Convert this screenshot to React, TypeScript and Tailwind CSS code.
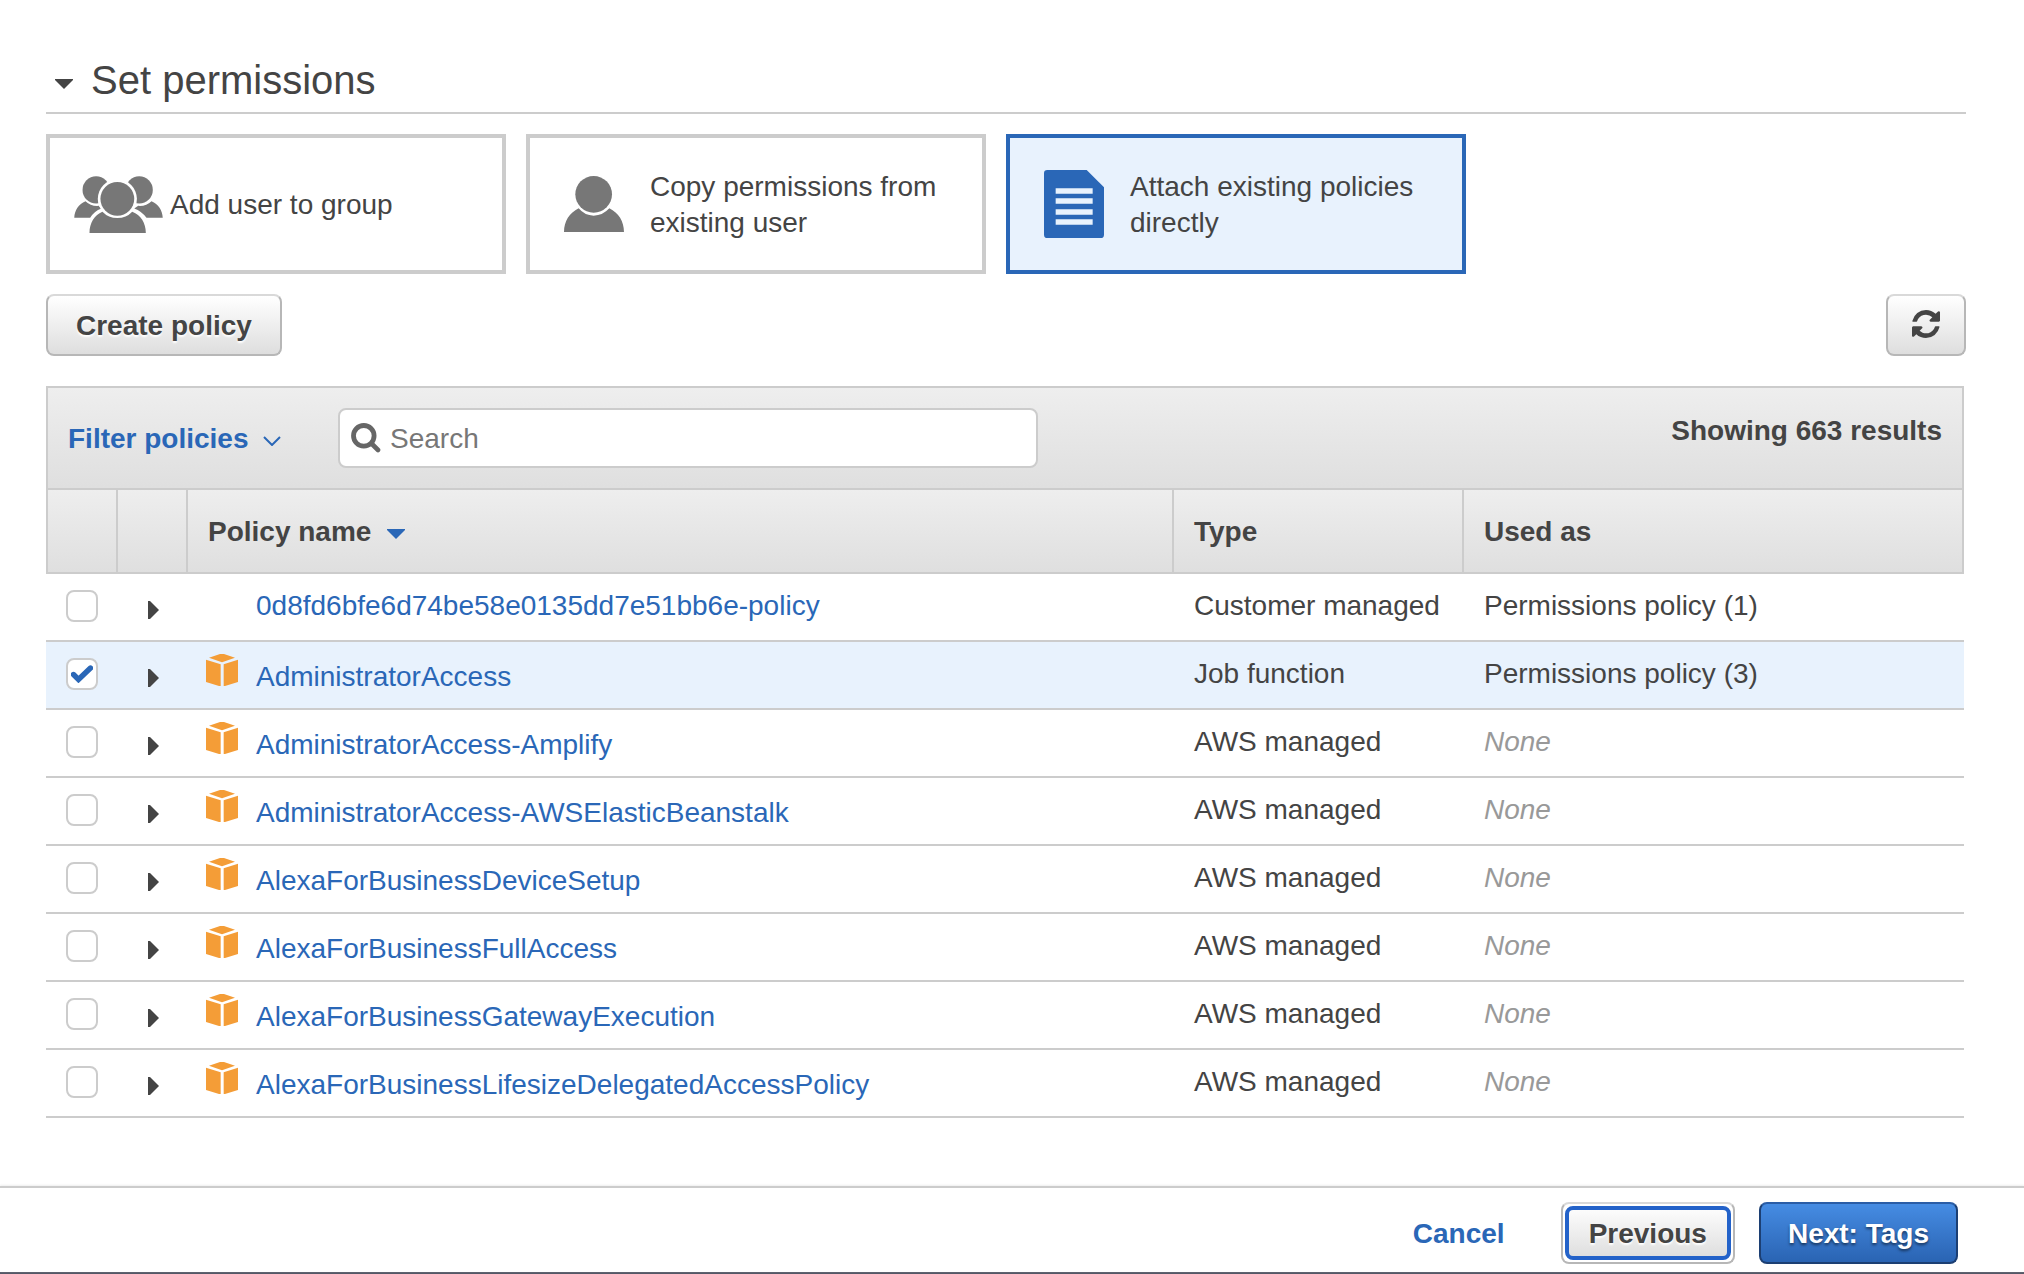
import React, { useState } from 'react';

interface Policy {
  name: string;
  type: string;
  usedAs: string | null;
  aws: boolean;
}

interface OptionCardProps {
  label: string;
  active: boolean;
  iconClass: string;
  icon: React.ReactNode;
  onSelect: () => void;
}

const policies: Policy[] = [
  {
    name: '0d8fd6bfe6d74be58e0135dd7e51bb6e-policy',
    type: 'Customer managed',
    usedAs: 'Permissions policy (1)',
    aws: false,
  },
  {
    name: 'AdministratorAccess',
    type: 'Job function',
    usedAs: 'Permissions policy (3)',
    aws: true,
  },
  { name: 'AdministratorAccess-Amplify', type: 'AWS managed', usedAs: null, aws: true },
  { name: 'AdministratorAccess-AWSElasticBeanstalk', type: 'AWS managed', usedAs: null, aws: true },
  { name: 'AlexaForBusinessDeviceSetup', type: 'AWS managed', usedAs: null, aws: true },
  { name: 'AlexaForBusinessFullAccess', type: 'AWS managed', usedAs: null, aws: true },
  { name: 'AlexaForBusinessGatewayExecution', type: 'AWS managed', usedAs: null, aws: true },
  {
    name: 'AlexaForBusinessLifesizeDelegatedAccessPolicy',
    type: 'AWS managed',
    usedAs: null,
    aws: true,
  },
];

const GroupIcon = () => (
  <svg className="h-[57px] w-[89px]" viewBox="132 404 267 172" fill="#777" aria-hidden="true">
    <circle cx="198" cy="446" r="41" />
    <circle cx="328" cy="446" r="41" />
    <path d="M132 530C133 508 145 488 166 480Q182 496 206 494L214 502Q192 510 180 530Z" />
    <path d="M399 530C398 508 386 488 365 480Q349 496 325 494L313 502Q335 510 350 530Z" />
    <circle cx="262" cy="473" r="59" fill="#fff" />
    <circle cx="262" cy="473" r="51" />
    <path d="M178 576C178 546 193 522 217 512Q235 531 262 531Q289 531 307 512C333 522 348 546 348 576Z" />
  </svg>
);

const UserIcon = () => (
  <svg className="h-14 w-[60px]" viewBox="192 168 180 168" fill="#777" aria-hidden="true">
    <circle cx="281" cy="223" r="55" />
    <path d="M192 336C192 304 208 279 236 265Q254 287 281 287Q308 287 328 265C356 279 372 304 372 336Z" />
  </svg>
);

const DocumentIcon = () => (
  <svg className="h-[68px] w-[60px]" viewBox="192 150 180 204" aria-hidden="true">
    <path
      d="M202 150H320L372 202V344Q372 354 362 354H202Q192 354 192 344V160Q192 150 202 150Z"
      fill="#2a67b7"
    />
    <path d="M227 205h111v16h-111zM227 235h111v16h-111zM227 268h111v16h-111zM227 298h111v16h-111z" fill="#e8f2fd" />
  </svg>
);

const CubeIcon = () => (
  <svg className="inline-block size-8 align-baseline" viewBox="0 0 96 96" fill="#f49d37" aria-hidden="true">
    <path d="M42 0H54L87 11L48 25L9 11Z" />
    <path d="M0 17L44 31V96H39L0 84Z" />
    <path d="M96 17L53 31V96H57L96 84Z" />
  </svg>
);

const RefreshIcon = () => (
  <svg className="size-7" viewBox="0 0 1536 1536" fill="currentColor" aria-hidden="true">
    <path d="M1511 928q0 5-1 7-64 268-268 434.5t-478 166.5q-146 0-282.5-55t-243.5-157l-129 129q-19 19-45 19t-45-19-19-45v-448q0-26 19-45t45-19h448q26 0 45 19t19 45-19 45l-137 137q71 66 161 102t187 36q134 0 250-65t186-179q11-17 53-117 8-23 30-23h192q13 0 22.5 9.5t9.5 22.5zm25-800v448q0 26-19 45t-45 19h-448q-26 0-45-19t-19-45 19-45l138-138q-148-137-349-137-134 0-250 65t-186 179q-11 17-53 117-8 23-30 23h-199q-13 0-22.5-9.5t-9.5-22.5v-7q65-268 270-434.5t480-166.5q146 0 284 55.5t245 156.5l130-129q19-19 45-19t45 19 19 45z" />
  </svg>
);

const SearchIcon = () => (
  <svg className="size-[30px] shrink-0" viewBox="0 0 30 30" fill="none" stroke="#666" aria-hidden="true">
    <circle cx="12.8" cy="12.8" r="10.3" strokeWidth="4.8" />
    <path d="M20.5 20.5L27 27" strokeWidth="4.6" strokeLinecap="round" />
  </svg>
);

const CaretDown = () => (
  <svg className="h-[10px] w-[18px]" viewBox="0 0 18 10" fill="currentColor" aria-hidden="true">
    <path d="M0 0H18V1L9 10L0 1Z" />
  </svg>
);

const OptionCard = ({ label, active, iconClass, icon, onSelect }: OptionCardProps) => (
  <button
    type="button"
    aria-pressed={active}
    onClick={onSelect}
    className={`flex h-[140px] min-w-0 max-w-[460px] flex-1 cursor-pointer items-center border-4 text-left ${
      active ? 'border-[#2a67b7] bg-[#e8f2fd]' : 'border-[#ccc] bg-white'
    }`}
  >
    <span className={`flex w-[120px] shrink-0 justify-center ${iconClass}`}>{icon}</span>
    <span className="pt-[2px] pr-4 leading-9">{label}</span>
  </button>
);

const greyButton =
  'flex h-[62px] cursor-pointer items-center justify-center rounded-lg border-2 border-[#b7b7b7] border-t-[#d9d9d9] bg-linear-to-b from-white to-[#dedede] font-bold [text-shadow:0_2px_2px_#fff]';

const App = () => {
  const [option, setOption] = useState('attach');
  const [selected, setSelected] = useState<string[]>(['AdministratorAccess']);
  const [search, setSearch] = useState('');

  const togglePolicy = (name: string) => {
    setSelected((prev) =>
      prev.includes(name) ? prev.filter((item) => item !== name) : [...prev, name]
    );
  };

  const visible = policies.filter((policy) =>
    policy.name.toLowerCase().includes(search.toLowerCase())
  );

  return (
    <div className="flex min-h-screen flex-col border-b-2 border-[#545866] bg-white font-['Liberation_Sans',Arial,sans-serif] text-[28px] leading-8 text-[#444]">
      <main className="flex-1 pt-14 pr-[58px] pb-10 pl-[46px]">
        <h1 className="border-b-2 border-[#ccc] pb-2 text-[40px] leading-12">
          <button type="button" aria-expanded="true" className="flex cursor-pointer items-center gap-[18px] pl-[9px]">
            <span className="pt-2">
              <CaretDown />
            </span>
            Set permissions
          </button>
        </h1>

        <div className="mt-5 flex gap-5">
          <OptionCard
            label="Add user to group"
            active={option === 'group'}
            iconClass="pl-4"
            icon={<GroupIcon />}
            onSelect={() => setOption('group')}
          />
          <OptionCard
            label="Copy permissions from existing user"
            active={option === 'copy'}
            iconClass="pl-2"
            icon={<UserIcon />}
            onSelect={() => setOption('copy')}
          />
          <OptionCard
            label="Attach existing policies directly"
            active={option === 'attach'}
            iconClass="pl-2"
            icon={<DocumentIcon />}
            onSelect={() => setOption('attach')}
          />
        </div>

        <div className="mt-5 flex justify-between">
          <button type="button" className={`${greyButton} px-7 pt-[2px]`}>
            Create policy
          </button>
          <button type="button" aria-label="Refresh" className={`${greyButton} w-20 pb-[2px]`}>
            <RefreshIcon />
          </button>
        </div>

        <section className="mt-[30px] mr-[2px]">
          <div className="flex items-start border-2 border-b-0 border-[#ccc] bg-linear-to-b from-[#eee] to-[#dfdfdf] p-5">
            <button
              type="button"
              className="flex h-[60px] w-[270px] shrink-0 cursor-pointer items-center gap-[14px] pt-[2px] font-bold text-[#2a67b7]"
            >
              Filter policies
              <svg className="mt-1 h-[10px] w-[18px]" viewBox="0 0 18 10" fill="none" aria-hidden="true">
                <path d="M1 1L9 9L17 1" stroke="currentColor" strokeWidth="2" />
              </svg>
            </button>
            <label className="flex h-[60px] w-[700px] items-center gap-[9px] rounded-lg border-2 border-[#ccc] bg-white px-[11px]">
              <SearchIcon />
              <input
                type="text"
                placeholder="Search"
                aria-label="Search policies"
                value={search}
                onChange={(e) => setSearch(e.target.value)}
                className="w-full min-w-0 pt-[2px] outline-none placeholder:text-[#777]"
              />
            </label>
            <p className="ml-auto font-bold leading-[46px]">Showing 663 results</p>
          </div>

          <table className="w-full table-fixed border-separate border-spacing-0 text-left">
            <thead>
              <tr className="h-[86px] *:border-2 *:border-[#ccc] *:bg-linear-to-b *:from-[#eee] *:to-[#dfdfdf] *:pt-[2px]">
                <th className="w-[72px]" />
                <th className="w-[70px] border-l-0!" />
                <th className="border-l-0! px-5">
                  <button type="button" className="flex cursor-pointer items-center gap-4 font-bold">
                    Policy name
                    <span className="mt-1 text-[#2a67b7]">
                      <CaretDown />
                    </span>
                  </button>
                </th>
                <th className="w-[290px] border-l-0! px-5">Type</th>
                <th className="w-[500px] border-l-0! px-5">Used as</th>
              </tr>
            </thead>
            <tbody>
              {visible.map((policy) => {
                const checked = selected.includes(policy.name);

                return (
                  <tr
                    key={policy.name}
                    className={`h-[68px] align-top *:border-b-2 *:border-[#ccc] ${checked ? 'bg-[#e8f2fd]' : ''}`}
                  >
                    <td className="pt-4 pl-5">
                      <label className="grid size-8 cursor-pointer place-items-center">
                        <input
                          type="checkbox"
                          aria-label={`Select ${policy.name}`}
                          checked={checked}
                          onChange={() => togglePolicy(policy.name)}
                          className="col-start-1 row-start-1 size-8 appearance-none rounded-lg border-2 border-[#ccc] bg-white"
                        />
                        {checked && (
                          <svg
                            className="pointer-events-none col-start-1 row-start-1 h-[18px] w-[22px]"
                            viewBox="0 0 22 18"
                            fill="none"
                            aria-hidden="true"
                          >
                            <path
                              d="M2.5 9.5L7.5 14.5L19.5 3"
                              stroke="#2a67b7"
                              strokeWidth="5.4"
                              strokeLinecap="round"
                            />
                          </svg>
                        )}
                      </label>
                    </td>
                    <td className="pt-[27px] pl-[30px]">
                      <button type="button" aria-label={`Expand ${policy.name}`} className="block cursor-pointer">
                        <svg className="h-[18px] w-[11px]" viewBox="0 0 11 18" fill="#444" aria-hidden="true">
                          <path d="M0 0H2L11 9L2 18H0Z" />
                        </svg>
                      </button>
                    </td>
                    <td className={policy.aws ? 'pt-3 pl-[18px]' : 'pt-4 pl-[68px]'}>
                      {policy.aws && <CubeIcon />}
                      <a href="#" className={policy.aws ? 'ml-[18px] text-[#2a67b7]' : 'text-[#2a67b7]'}>
                        {policy.name}
                      </a>
                    </td>
                    <td className="px-5 pt-4 whitespace-nowrap">{policy.type}</td>
                    <td className="px-5 pt-4">
                      {policy.usedAs ?? <em className="text-[#999]">None</em>}
                    </td>
                  </tr>
                );
              })}
            </tbody>
          </table>
        </section>
      </main>

      <footer className="flex items-center justify-end border-t-2 border-[#ccc] pt-[14px] pr-[66px] pb-2 shadow-[0_-1px_2px_#eee]">
        <a href="#" className="mr-14 pt-[2px] font-bold text-[#2a67b7]">
          Cancel
        </a>
        <button
          type="button"
          className="mr-6 h-[62px] cursor-pointer rounded-lg border-2 border-[#b7b7b7] border-t-[#d9d9d9] bg-white p-[2px] font-bold"
        >
          <span className="flex h-full items-center rounded-lg border-4 border-[#2362c9] bg-linear-to-b from-[#fcfcfc] to-[#dfdfdf] px-5 pt-[2px] [text-shadow:0_2px_2px_#fff]">
            Previous
          </span>
        </button>
        <button
          type="button"
          className="h-[62px] cursor-pointer rounded-lg border-2 border-[#1c3f73] border-t-[#2a5da6] bg-linear-to-b from-[#468ce3] to-[#2a64b3] px-[27px] pt-[2px] font-bold text-white [text-shadow:0_2px_3px_#0008]"
        >
          Next: Tags
        </button>
      </footer>
    </div>
  );
};

export default App;
